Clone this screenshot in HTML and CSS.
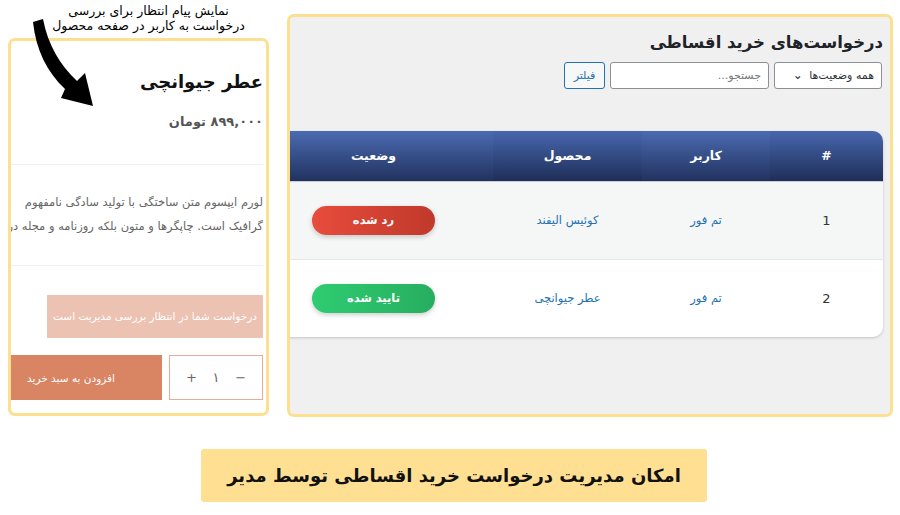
FILE: index.html
```html
<!DOCTYPE html>
<html lang="fa">
<head>
    <meta charset="UTF-8">
    <meta name="viewport" content="width=device-width, initial-scale=1.0">
    <title>خرید اقساطی</title>
    <link rel="stylesheet" href="styles.css">
</head>
<body>
    <div class="top">
        <div class="product-col">
            <p class="note">نمایش پیام انتظار برای بررسی<br>درخواست به کاربر در صفحه محصول</p>
            <svg class="note-arrow" width="100" height="110" viewBox="0 0 100 110">
                <path d="M33,22 C36,50 47,72 65,89 L61,98 L93,106 L85,73 L77,81 C60,65 48,45 43,19 Z" fill="#000"/>
            </svg>
            <div class="product-card">
                <h1 class="product-title">عطر جیوانچی</h1>
                <p class="product-price">۸۹۹,۰۰۰ تومان</p>
                <hr class="sep">
                <div class="product-desc">
                    <p>لورم ایپسوم متن ساختگی با تولید سادگی نامفهوم</p>
                    <p>گرافیک است. چاپگرها و متون بلکه روزنامه و مجله در</p>
                </div>
                <hr class="sep">
                <div class="pending-msg">درخواست شما در انتظار بررسی مدیریت است</div>
                <div class="cart-row">
                    <div class="qty"><span>−</span><span>۱</span><span>+</span></div>
                    <button class="add-cart">افزودن به سبد خرید</button>
                </div>
            </div>
        </div>

        <div class="admin-panel">
            <h2 class="panel-title">درخواست‌های خرید اقساطی</h2>
            <div class="filters">
                <div class="status-select">همه وضعیت‌ها <span class="chevron">⌄</span></div>
                <div class="search">جستجو...</div>
                <button class="btn-filter">فیلتر</button>
            </div>
            <div class="requests">
                <table>
                    <colgroup>
                        <col style="width:113px">
                        <col style="width:128px">
                        <col style="width:149px">
                        <col>
                    </colgroup>
                    <thead>
                        <tr><th>#</th><th>کاربر</th><th>محصول</th><th>وضعیت</th></tr>
                    </thead>
                    <tbody>
                        <tr>
                            <td class="num">1</td>
                            <td><a href="#">تم فور</a></td>
                            <td><a href="#">کوئیس الیفند</a></td>
                            <td><span class="pill pill-rejected">رد شده</span></td>
                        </tr>
                        <tr>
                            <td class="num">2</td>
                            <td><a href="#">تم فور</a></td>
                            <td><a href="#">عطر جیوانچی</a></td>
                            <td><span class="pill pill-approved">تایید شده</span></td>
                        </tr>
                    </tbody>
                </table>
            </div>
        </div>
    </div>

    <div class="caption">امکان مدیریت درخواست خرید اقساطی توسط مدیر</div>
</body>
</html>
```

FILE: styles.css
```css
* {
    margin: 0;
    padding: 0;
    box-sizing: border-box;
    font-family: 'DejaVu Sans', sans-serif;
}
body {
    background: #ffffff;
    width: 900px;
    height: 515px;
    overflow: hidden;
}
.top {
    display: flex;
    align-items: flex-start;
    gap: 18px;
    padding-left: 8px;
}

/* product page preview */
.product-col {
    position: relative;
    width: 261px;
}
.note {
    height: 38px;
    padding: 3px 0 0 12px;
    margin-right: -8px;
    direction: rtl;
    text-align: center;
    font-size: 12.5px;
    line-height: 15px;
    color: #000;
}
.note-arrow {
    position: absolute;
    left: -8px;
    top: 0;
}
.product-card {
    height: 378px;
    border: 3px solid #fde08f;
    border-radius: 7px;
    overflow: hidden;
    background: #fff;
    direction: rtl;
    padding: 27px 3px 0 0;
}
.product-title {
    font-size: 18px;
    line-height: 28px;
    font-weight: bold;
    color: #111;
}
.product-price {
    margin-top: 16px;
    font-size: 13px;
    line-height: 20px;
    font-weight: bold;
    color: #555;
}
.sep {
    border: none;
    border-top: 1px solid #f0f0f0;
    margin-left: -10px;
}
.product-price + .sep {
    margin-top: 32px;
}
.product-desc {
    margin: 25px 0 27px;
    white-space: nowrap;
    font-size: 11.5px;
    line-height: 24px;
    color: #666;
}
.pending-msg {
    margin-top: 29px;
    width: 216px;
    height: 43px;
    line-height: 43px;
    background: #ecc2b2;
    color: #fff;
    font-size: 10.5px;
    text-align: center;
}
.cart-row {
    display: flex;
    gap: 7px;
    margin-top: 17px;
    height: 45px;
}
.qty {
    width: 94px;
    flex-shrink: 0;
    display: flex;
    justify-content: space-around;
    align-items: center;
    padding: 0 8px;
    border: 1px solid #e8ab96;
    color: #666;
    font-size: 13px;
}
.add-cart {
    width: 200px;
    flex-shrink: 0;
    border: none;
    background: #d98564;
    color: #fff;
    font-size: 10.5px;
    text-align: right;
    padding-right: 47px;
}

/* admin requests panel */
.admin-panel {
    width: 606px;
    height: 403px;
    margin-top: 14px;
    border: 3px solid #fde08f;
    border-radius: 7px;
    background: #f0f0f1;
    overflow: hidden;
    direction: rtl;
    padding: 12px 7px 0 0;
}
.panel-title {
    font-size: 16.5px;
    line-height: 28px;
    font-weight: bold;
    color: #1d2327;
}
.filters {
    display: flex;
    gap: 5px;
    margin: 5px 1px 0 0;
    height: 27px;
}
.status-select, .search {
    border: 1px solid #8c8f94;
    border-radius: 3px;
    background: #fff;
    font-size: 11px;
    line-height: 25px;
    color: #2c3338;
    padding: 0 7px;
}
.status-select {
    width: 108px;
}
.chevron {
    font-size: 12px;
    margin-right: 3px;
}
.search {
    width: 159px;
    color: #777;
}
.btn-filter {
    width: 41px;
    border: 1px solid #2271b1;
    border-radius: 3px;
    background: #f6f7f7;
    color: #2271b1;
    font-size: 11px;
}
.requests {
    margin: 42px 0 0 -36px;
    border-radius: 10px;
    overflow: hidden;
    box-shadow: 0 1px 3px rgba(0, 0, 0, 0.18);
    background: #fff;
}
.requests table {
    width: 100%;
    border-collapse: collapse;
    table-layout: fixed;
}
.requests th {
    height: 50px;
    background: linear-gradient(180deg, #4767ad, #1f2e58);
    color: #fff;
    font-size: 12.5px;
    font-weight: bold;
    border-bottom: 1px solid #c9ccd3;
}
.requests th:nth-child(even) {
    background: linear-gradient(180deg, #4a6bb2, #22325e);
}
.requests td {
    height: 78px;
    text-align: center;
    font-size: 11.5px;
    border-bottom: 1px solid #e6e7e8;
}
.requests tbody tr:nth-child(odd) td {
    background: #f5f6f6;
}
.requests tbody tr:last-child td {
    border-bottom: none;
}
.requests a {
    color: #2271b1;
    text-decoration: none;
}
.requests .num {
    color: #333;
    font-size: 13px;
}
.pill {
    display: inline-block;
    width: 123px;
    height: 29px;
    line-height: 29px;
    border-radius: 15px;
    color: #fff;
    font-weight: bold;
    font-size: 11.5px;
    box-shadow: 0 2px 5px rgba(0, 0, 0, 0.2);
}
.pill-rejected {
    background: linear-gradient(90deg, #e74c3c, #c0392b);
}
.pill-approved {
    background: linear-gradient(90deg, #2ecc71, #27ae60);
}

/* caption strip */
.caption {
    width: 506px;
    height: 53px;
    margin: 32px 0 0 201px;
    background: #ffe093;
    border-radius: 3px;
    direction: rtl;
    text-align: center;
    line-height: 53px;
    font-size: 18px;
    font-weight: bold;
    color: #111;
}
```
